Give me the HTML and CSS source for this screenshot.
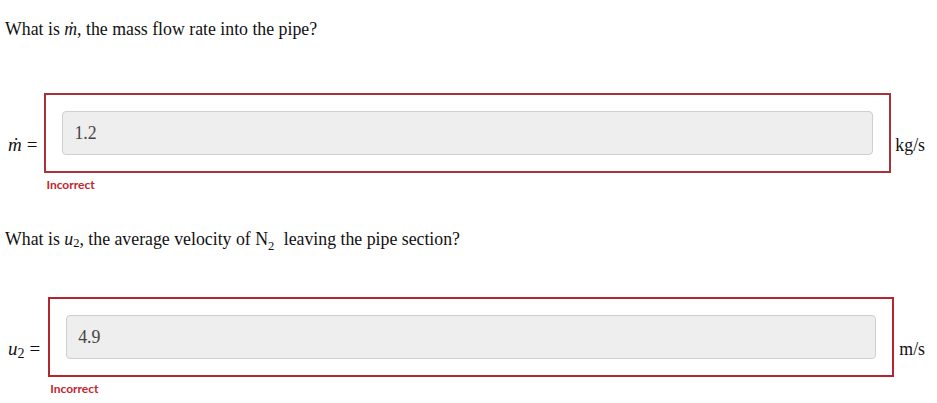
FILE: index.html
```html
<!DOCTYPE html>
<html>
<head>
<meta charset="utf-8">
<link rel="stylesheet" href="styles.css">
</head>
<body>
<div class="page">
  <p class="question q1">What is <i>&#x1E41;</i>, the mass flow rate into the pipe?</p>
  <div class="row row1">
    <div class="label"><i>&#x1E41;</i><span class="eq">=</span></div>
    <div class="answer">
      <div class="box box1"><div class="input">1.2</div></div>
      <div class="msg">Incorrect</div>
    </div>
    <div class="unit">kg/s</div>
  </div>
  <p class="question q2">What is <i>u</i><sub class="msub">2</sub>, the average velocity of N<sub class="chem">2</sub> leaving the pipe section?</p>
  <div class="row row2">
    <div class="label"><i>u</i><sub class="msub">2</sub><span class="eq">=</span></div>
    <div class="answer">
      <div class="box box2"><div class="input">4.9</div></div>
      <div class="msg">Incorrect</div>
    </div>
    <div class="unit">m/s</div>
  </div>
</div>
</body>
</html>
```
FILE: styles.css
```css
html, body {
  margin: 0;
  padding: 0;
  background: #fff;
}
.page {
  font-family: "Liberation Serif", "Times New Roman", serif;
  font-size: 17.8px;
  line-height: 20px;
  color: #111;
}
.question {
  margin: 0;
  padding-left: 5px;
}
.q1 {
  padding-top: 19px;
}
.q2 {
  margin-top: 37px;
}
.msub {
  font-size: 12.5px;
  line-height: 0;
  vertical-align: -2px;
}
.chem {
  font-size: 12.5px;
  line-height: 0;
  vertical-align: -5px;
  margin-right: 5px;
}
.row {
  display: flex;
  align-items: flex-start;
}
.row1 {
  margin-top: 54px;
}
.row2 {
  margin-top: 48px;
}
.label {
  padding-left: 8px;
  margin-top: 42px;
  margin-right: 7px;
  font-size: 19px;
  white-space: nowrap;
}
.label .msub {
  font-size: 14px;
  vertical-align: -3px;
}
.row2 .label {
  margin-right: 8px;
}
.eq {
  margin-left: 5px;
}
.answer {
  flex: 1;
  display: flex;
  flex-direction: column;
}
.box {
  border: 2px solid #a8323a;
  padding: 16px;
}
.box2 {
  border-color: #b4262d;
}
.input {
  height: 42px;
  box-sizing: content-box;
  border: 1px solid #cfcfcf;
  border-radius: 4px;
  background: #eeeeee;
  padding-left: 11px;
  display: flex;
  align-items: center;
  color: #444;
}
.msg {
  margin-top: 5px;
  padding-left: 2px;
  font-family: Lato, "Open Sans", sans-serif;
  font-weight: 700;
  font-size: 12px;
  line-height: 14px;
  color: #c1272d;
}
.unit {
  margin-top: 42px;
  margin-left: 4px;
  margin-right: 12px;
  white-space: nowrap;
}
.row2 .unit {
  margin-left: 5px;
}
```
